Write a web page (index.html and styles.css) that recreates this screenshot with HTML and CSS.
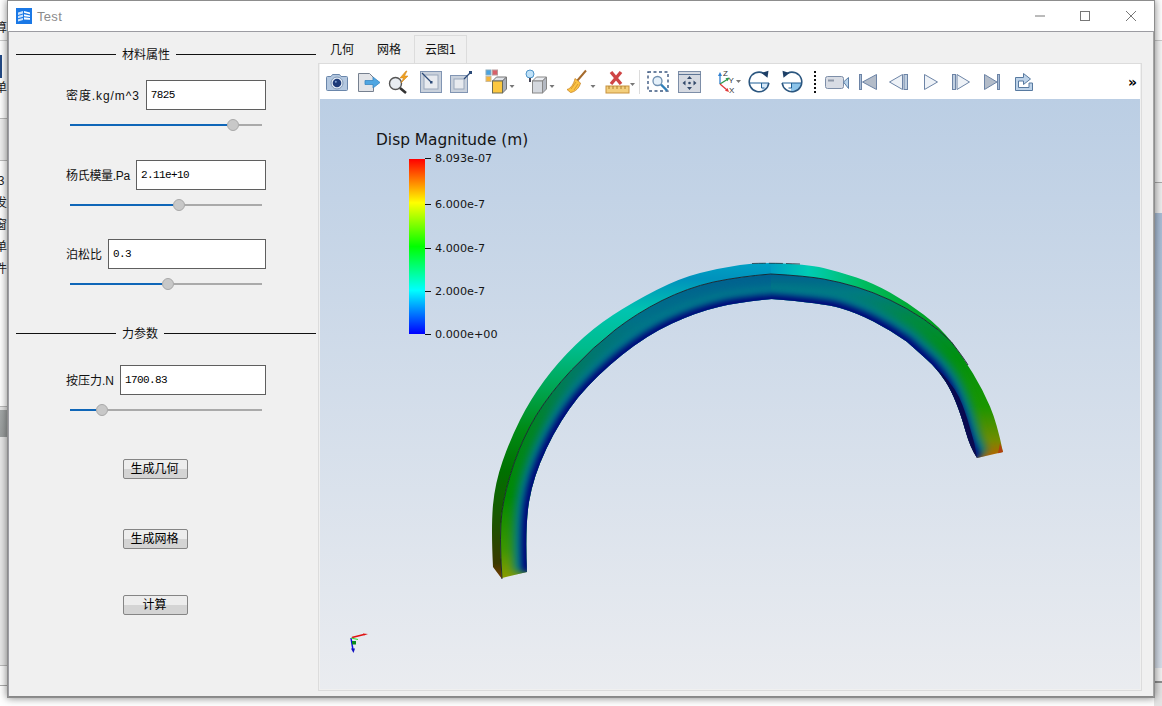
FILE: index.html
```html
<!DOCTYPE html>
<html lang="zh">
<head>
<meta charset="utf-8">
<title>Test</title>
<link rel="stylesheet" href="styles.css">
</head>
<body>
<div class="desktop">
  <div class="strip-left">
    <div class="bg-a"><span class="frag frag-a">算</span></div>
    <div class="bg-b"><i class="bluebar"></i><span class="frag frag-b">单</span></div>
    <div class="bg-c"></div>
    <div class="bg-d">
      <span class="frag">3</span><span class="frag">发</span><span class="frag">窗</span><span class="frag">单</span><span class="frag">件</span>
    </div>
    <div class="bg-gray"></div>
    <div class="bg-e"></div>
    <div class="bg-f"></div>
  </div>
  <div class="strip-right">
    <div class="r-a"></div><div class="r-b"></div><div class="r-b2"></div><div class="r-c"></div><div class="r-d"></div><div class="r-e"></div>
  </div>

  <div class="window">
    <header class="titlebar">
      <svg class="appicon" width="16" height="16" viewBox="0 0 16 16">
        <rect width="16" height="16" fill="#1a78e6"/>
        <path d="M2 4.500 7 3v2.400L2 7zM2 8l5-1.400v2.200L2 10.200zM2 11.200l5-1.300V12l-5 1.500z" fill="#cfe4fb"/>
        <path d="M8 3l6 1.500v1.700L8 4.800zM8 6.200l6 1.200v1.700L8 8.200zM8 9.300l6 .8v1.700L8 11.400z" fill="#fff"/>
      </svg>
      <span class="apptitle">Test</span>
      <div class="winctl">
        <svg width="45" height="30" viewBox="0 0 45 30"><path d="M17 15h10" stroke="#777" fill="none"/></svg>
        <svg width="45" height="30" viewBox="0 0 45 30"><rect x="17.500" y="10.500" width="9" height="9" stroke="#777" fill="none"/></svg>
        <svg width="45" height="30" viewBox="0 0 45 30"><path d="M18 10l10 10M28 10L18 20" stroke="#777" fill="none"/></svg>
      </div>
    </header>

    <main class="body">
      <aside class="panel">
        <div class="legendline"><span>材料属性</span></div>

        <div class="row row-1"><label>密度.kg/m^3</label><div class="input">7825</div></div>
        <div class="slider"><i class="fill" style="width:157px"></i><i class="knob"></i><i class="rest"></i></div>

        <div class="row row-2"><label>杨氏模量.Pa</label><div class="input">2.11e+10</div></div>
        <div class="slider"><i class="fill" style="width:103px"></i><i class="knob"></i><i class="rest"></i></div>

        <div class="row row-3"><label>泊松比</label><div class="input">0.3</div></div>
        <div class="slider"><i class="fill" style="width:92px"></i><i class="knob"></i><i class="rest"></i></div>

        <div class="legendline line-2"><span>力参数</span></div>

        <div class="row row-4"><label>按压力.N</label><div class="input">1700.83</div></div>
        <div class="slider"><i class="fill" style="width:26px"></i><i class="knob"></i><i class="rest"></i></div>

        <button class="btn btn-1">生成几何</button>
        <button class="btn btn-2">生成网格</button>
        <button class="btn btn-3">计算</button>
      </aside>

      <section class="workspace">
        <nav class="tabs">
          <span class="tab tab-1">几何</span>
          <span class="tab tab-2">网格</span>
          <span class="tab active">云图1</span>
        </nav>
        <div class="pane">
          <div class="toolbar">
            <!-- camera -->
            <svg class="ic" width="24" height="24" viewBox="0 0 24 24">
              <path d="M1.500 7.500a1 1 0 0 1 1-1H6l1.500-2h7l1.500 2h5.500a1 1 0 0 1 1 1v12a1 1 0 0 1-1 1h-19a1 1 0 0 1-1-1z" fill="#b4c8e0" stroke="#6a86aa"/>
              <circle cx="12" cy="13" r="6" fill="#e4ecf5" stroke="#7f97b6"/>
              <circle cx="12" cy="13" r="4.300" fill="#1d3a78"/>
              <circle cx="10.800" cy="11.700" r="1" fill="#7f9fd0"/>
            </svg>
            <!-- export -->
            <svg class="ic g8" width="24" height="24" viewBox="0 0 24 24">
              <path d="M1.500 3.500h11l4 4v14h-15z" fill="#e2e4e8" stroke="#76808f"/>
              <path d="M8 10.500h8V7l7 5.500L16 18v-3.500H8z" fill="#4fa6e2" stroke="#3a86c0" stroke-width=".8"/>
            </svg>
            <!-- magnifier + bolt -->
            <svg class="ic g6" width="24" height="24" viewBox="0 0 24 24">
              <circle cx="8.500" cy="13.500" r="6" fill="#e9edf2" stroke="#555" stroke-width="1.400"/>
              <path d="M13 18l6 5" stroke="#333" stroke-width="2.600" fill="none"/>
              <path d="M19 1l-6 7h3.500L14 13l7-7h-3.500L20 1z" fill="#f0a020" stroke="#c8801a" stroke-width=".5"/>
            </svg>
            <!-- reset camera -->
            <svg class="ic g8" width="24" height="24" viewBox="0 0 24 24">
              <rect x="1.500" y="1.500" width="21" height="21" fill="#c9d1dc" stroke="#8195b3"/>
              <rect x="5" y="5" width="14" height="14" fill="#e7eaef" stroke="#9aa8bb"/>
              <path d="M3 3l9 9" stroke="#2c4a78" stroke-width="1.200" fill="none"/>
              <rect x="11" y="11" width="2.500" height="2.500" fill="#2c4a78"/>
            </svg>
            <!-- zoom closest -->
            <svg class="ic g6" width="24" height="24" viewBox="0 0 24 24">
              <rect x="1.500" y="5.500" width="17" height="17" fill="#c9d1dc" stroke="#8195b3"/>
              <rect x="5" y="9" width="10" height="10" fill="#e7eaef" stroke="#9aa8bb"/>
              <path d="M15 9l6-6" stroke="#2c4a78" stroke-width="1.200" fill="none"/>
              <rect x="20" y="1" width="3" height="3" fill="#2c4a78"/>
            </svg>
            <!-- colour cube -->
            <svg class="ic g12" width="30" height="26" viewBox="0 0 30 26">
              <rect x="1" y="1" width="5" height="5" fill="#4aa3e0" stroke="#8ab"/>
              <rect x="7.500" y="1" width="5" height="5" fill="#d8606a" stroke="#b99"/>
              <rect x="1" y="7.500" width="5" height="5" fill="#f5b53a" stroke="#cb9"/>
              <path d="M7.500 12l4-4h10l-4 4z" fill="#e0e3e8" stroke="#777"/>
              <path d="M17.500 12l4-4v12l-4 4z" fill="#a8aeb8" stroke="#777"/>
              <rect x="7.500" y="12" width="10" height="12" fill="#fcc840" stroke="#6b6b55"/>
              <path d="M24.500 16h5l-2.500 3z" fill="#777"/>
            </svg>
            <!-- light cube -->
            <svg class="ic g10" width="30" height="26" viewBox="0 0 30 26">
              <circle cx="5" cy="5" r="4" fill="#bfe1f8" stroke="#4f94c8"/>
              <path d="M4 9h2v4H4z" fill="#445"/>
              <path d="M7.500 12l4-4h10l-4 4z" fill="#eceef2" stroke="#888"/>
              <path d="M17.500 12l4-4v12l-4 4z" fill="#b4b9c2" stroke="#888"/>
              <rect x="7.500" y="12" width="10" height="12" fill="#d4d8de" stroke="#888"/>
              <path d="M24.500 16h5l-2.500 3z" fill="#777"/>
            </svg>
            <!-- broom -->
            <svg class="ic g11" width="30" height="26" viewBox="0 0 30 26">
              <path d="M20 1.500l-9 10.500" stroke="#a56a2c" stroke-width="2" fill="none"/>
              <path d="M9 9.500l5.500 4.500C13.500 19 9 23 4.500 23.500L1 20.500C5 19.500 8 14.500 9 9.500z" fill="#fbc343" stroke="#c9862a" stroke-width=".8"/>
              <path d="M10 13l-5 7M12 15l-4 6" stroke="#c9862a" stroke-width=".7" fill="none"/>
              <path d="M24.500 16h5l-2.500 3z" fill="#777"/>
            </svg>
            <!-- ruler x -->
            <svg class="ic g9" width="30" height="26" viewBox="0 0 30 26">
              <rect x="1" y="17" width="23" height="7" fill="#f3cf7d" stroke="#c8923f"/>
              <path d="M4 17v3M8 17v3M12 17v3M16 17v3M20 17v3" stroke="#b0802f" fill="none"/>
              <path d="M6 3l10 12M16 3L6 15" stroke="#cf4545" stroke-width="3.400" fill="none"/>
              <path d="M25 14h5l-2.500 3z" fill="#777"/>
            </svg>
            <i class="sep"></i>
            <!-- zoom box -->
            <svg class="ic g7" width="22" height="24" viewBox="0 0 22 24">
              <rect x="1" y="2" width="20" height="19" fill="#fff" stroke="#3c5880" stroke-width="1.400" stroke-dasharray="3 2.500"/>
              <circle cx="10.500" cy="11" r="4.500" fill="#e6f1fa" stroke="#6f8fb0" stroke-width="1.300"/>
              <path d="M14 14.500l6 6" stroke="#2f7fb8" stroke-width="2.400" fill="none"/>
            </svg>
            <!-- move -->
            <svg class="ic g9" width="23" height="24" viewBox="0 0 23 24">
              <rect x=".5" y="1.500" width="22" height="21" fill="#d5d9e1" stroke="#7d8ea8"/>
              <path d="M.5 4.500h22" stroke="#5f7696"/>
              <path d="M11.500 6l-2.500 3h5zM11.500 20l-2.500-3h5zM4.500 13l3-2.500v5zM18.500 13l-3-2.500v5z" fill="#33496a"/>
              <circle cx="11.500" cy="13" r="1.300" fill="#33496a"/>
            </svg>
            <!-- xyz -->
            <svg class="ic g14" width="26" height="26" viewBox="0 0 26 26">
              <path d="M5 15V6" stroke="#2f7fd0" stroke-width="1.300" fill="none"/>
              <path d="M5 3l-2 4h4z" fill="#2f7fd0"/>
              <path d="M5 15l8-5" stroke="#2f9a4a" stroke-width="1.300" fill="none"/>
              <path d="M14.500 8.500l-4 .8 2 3z" fill="#2f9a4a"/>
              <path d="M5 15l7 6" stroke="#e03a3a" stroke-width="1.300" fill="none"/>
              <path d="M14 23l-1.500-4-2.500 2.800z" fill="#e03a3a"/>
              <text class="axl" x="8" y="7">Z</text>
              <text class="axl" x="13.500" y="14">Y</text>
              <text class="axl" x="14" y="24">X</text>
              <path d="M21 11h5l-2.500 3z" fill="#777"/>
            </svg>
            <!-- rotate cw -->
            <svg class="ic g7" width="22" height="24" viewBox="0 0 22 24">
              <path d="M14 13v9a10 10 0 0 0 6.500-9z" fill="#d5e8f8"/>
              <path d="M1 13h20M13.500 13v5h3" stroke="#1f5f95" fill="none"/>
              <path d="M15.500 3.200A9.800 9.800 0 1 0 20.800 13" stroke="#2b567f" stroke-width="1.600" fill="none"/>
              <path d="M19.500 7.800L20.500 .8 13.500 3z" fill="#1d3f66"/>
            </svg>
            <!-- rotate ccw -->
            <svg class="ic g11" width="22" height="24" viewBox="0 0 22 24">
              <path d="M10 13v9a10 10 0 0 0 10.800-9z" fill="#8cc4ea"/>
              <path d="M1 13h20M10.500 13v5h-3" stroke="#1f5f95" fill="none"/>
              <path d="M6.500 3.200A9.800 9.800 0 1 1 1.200 13" stroke="#2b567f" stroke-width="1.600" fill="none"/>
              <path d="M2.500 7.800L1.500 .8 8.500 3z" fill="#1d3f66"/>
            </svg>
            <i class="dots"></i>
            <!-- video -->
            <svg class="ic g9" width="24" height="24" viewBox="0 0 24 24">
              <rect x=".5" y="6.500" width="18" height="12" rx="2" fill="#d8dce4" stroke="#7d8ea8"/>
              <rect x="3" y="9.500" width="6" height="2" fill="#8e98a8"/>
              <path d="M18.500 12l5-4.500v11z" fill="#b8d2ea" stroke="#5d7fa6"/>
            </svg>
            <!-- first -->
            <svg class="ic g10" width="18" height="24" viewBox="0 0 18 24">
              <rect x=".5" y="4.500" width="2" height="15" fill="#a9bdd6" stroke="#6d84a6"/>
              <path d="M17.500 4.500v15L3.500 12z" fill="#b3bcc9" stroke="#6d84a6"/>
            </svg>
            <!-- prev -->
            <svg class="ic g12" width="19" height="24" viewBox="0 0 19 24">
              <path d="M13.500 4.500v15L.5 12z" fill="#eef2f7" stroke="#6d84a6"/>
              <rect x="15" y="4.500" width="3.500" height="15" fill="#c0cfe0" stroke="#6d84a6"/>
            </svg>
            <!-- play -->
            <svg class="ic g16" width="14" height="24" viewBox="0 0 14 24">
              <path d="M.5 4.500v15L13.500 12z" fill="#eef2f7" stroke="#6d84a6"/>
            </svg>
            <!-- next -->
            <svg class="ic g14" width="18" height="24" viewBox="0 0 18 24">
              <rect x=".5" y="4.500" width="3" height="15" fill="#c0cfe0" stroke="#6d84a6"/>
              <path d="M5 4.500v15L17.500 12z" fill="#eef2f7" stroke="#6d84a6"/>
            </svg>
            <!-- last -->
            <svg class="ic g14" width="16" height="24" viewBox="0 0 16 24">
              <path d="M.5 4.500v15L13 12z" fill="#b3bcc9" stroke="#6d84a6"/>
              <rect x="13.500" y="4.500" width="2" height="15" fill="#a9bdd6" stroke="#6d84a6"/>
            </svg>
            <!-- loop -->
            <svg class="ic g14" width="19" height="24" viewBox="0 0 19 24">
              <path d="M1.500 7.500h8V3.500l7 5.500-7 5.500V11H4.500v6.500H15V13h3.500v7.500h-17z" fill="#bdd2e8" stroke="#587aa0" stroke-linejoin="round"/>
            </svg>
            <span class="more">»</span>
          </div>

          <div class="viewport">
            <svg class="scene" width="820" height="589" viewBox="320 99 820 589">
              <defs>
                <linearGradient id="rainbow" x1="0" y1="1" x2="0" y2="0">
                  <stop offset="0" stop-color="#00f"/><stop offset=".25" stop-color="#0ff"/>
                  <stop offset=".5" stop-color="#0f0"/><stop offset=".75" stop-color="#ff0"/>
                  <stop offset="1" stop-color="#f00"/>
                </linearGradient>
                <linearGradient id="topL" gradientUnits="userSpaceOnUse" x1="0" y1="579" x2="0" y2="263">
                  <stop offset="0" stop-color="#7a3a00"/><stop offset=".05" stop-color="#3a3a00"/>
                  <stop offset=".17" stop-color="#1e5200"/><stop offset=".34" stop-color="#007000"/>
                  <stop offset=".47" stop-color="#008a14"/><stop offset=".6" stop-color="#00a550"/>
                  <stop offset=".73" stop-color="#00bc8c"/><stop offset=".85" stop-color="#00c4b0"/>
                  <stop offset=".95" stop-color="#0092bc"/><stop offset="1" stop-color="#00a0c4"/>
                </linearGradient>
                <linearGradient id="topR" gradientUnits="userSpaceOnUse" x1="771" y1="0" x2="1003" y2="0">
                  <stop offset="0" stop-color="#00a0c4"/><stop offset=".16" stop-color="#00ccb4"/>
                  <stop offset=".4" stop-color="#00bc60"/><stop offset=".7" stop-color="#00a020"/>
                  <stop offset="1" stop-color="#009000"/>
                </linearGradient>
                <linearGradient id="frontL" gradientUnits="userSpaceOnUse" x1="0" y1="579" x2="0" y2="274">
                  <stop offset="0" stop-color="#8c9c00"/><stop offset=".1" stop-color="#3c9600"/>
                  <stop offset=".27" stop-color="#008a00"/><stop offset=".5" stop-color="#008424"/>
                  <stop offset=".65" stop-color="#007c58"/><stop offset=".85" stop-color="#007088"/>
                  <stop offset="1" stop-color="#006090"/>
                </linearGradient>
                <linearGradient id="frontR" gradientUnits="userSpaceOnUse" x1="0" y1="274" x2="0" y2="458">
                  <stop offset="0" stop-color="#006090"/><stop offset=".1" stop-color="#007a80"/>
                  <stop offset=".25" stop-color="#008a40"/><stop offset=".45" stop-color="#009010"/>
                  <stop offset=".72" stop-color="#1a9600"/><stop offset=".9" stop-color="#708c00"/>
                  <stop offset="1" stop-color="#c06000"/>
                </linearGradient>
                <filter id="b3" x="-10%" y="-10%" width="120%" height="120%"><feGaussianBlur stdDeviation="3"/></filter>
                <filter id="b4" x="-10%" y="-10%" width="120%" height="120%"><feGaussianBlur stdDeviation="4"/></filter>
                <clipPath id="clipFL"><path d="M502,578Q499,533 502,511.500Q505,490 514,463.500Q523,437 536.500,415Q550,393 571.500,370Q593,347 615,330Q637,313 662,300.500Q687,288 713.500,282Q740,276.500 772,274L772,299Q740,302 718.500,307Q697,312 672,323.500Q647,335 622,355Q597,375 578.500,397Q560,420 546.500,448.500Q533,477 529,502Q525,527 527,572Z"/></clipPath>
                <clipPath id="clipFR"><path d="M771,274Q807,276 823.500,279Q840,282 856.500,287Q873,292 890,300Q907,308 923.500,319Q940,330 951.500,342Q963,357 973,373.500Q983,390 990,406.500Q997,423 1003,452L977,458Q970,447 965.500,431Q961,415 956,402.500Q951,390 945.500,381.500Q940,373 932,364.500Q923,356 906.500,341.500Q890,330 873.500,321.500Q857,313 840,308Q823,303 771,299Z"/></clipPath>
              </defs>

              <!-- scalar bar -->
              <rect x="409" y="159" width="16" height="175" fill="url(#rainbow)"/>
              <path d="M425 158.500h6M425 204.500h6M425 248.500h6M425 291.500h6M425 334.500h6" stroke="#111" fill="none"/>
              <text class="lg-title" x="376" y="145">Disp Magnitude (m)</text>
              <text class="lg" x="435" y="162">8.093e-07</text>
              <text class="lg" x="435" y="208">6.000e-7</text>
              <text class="lg" x="435" y="252">4.000e-7</text>
              <text class="lg" x="435" y="295">2.000e-7</text>
              <text class="lg" x="435" y="338">0.000e+00</text>

              <!-- ring: outer faces -->
              <path fill="url(#topL)" d="M493,567Q491,527 493,505Q495,483 502.500,461.500Q510,440 520,420Q530,400 544,381Q558,362 575.500,345Q593,328 613,315Q633,302 656.500,290Q680,278 700,273Q720,268 740,265Q755,263 772,263L772,274.500Q740,276.500 713.500,282Q687,288 662,300.500Q637,313 615,330Q593,347 571.500,370Q550,393 536.500,415Q523,437 514,463.500Q505,490 502,511.500Q499,533 502,579Z"/>
              <path fill="url(#topR)" d="M771,263Q807,264 823.500,268Q840,272 856.500,277.500Q873,283 890,292.500Q907,302 923.500,314.500Q940,327 951.500,342Q940,330 923.500,319Q907,308 890,300Q873,292 856.500,287Q840,282 823.500,279Q807,276 771,274.500Z"/>

              <!-- ring: front face, left half -->
              <g clip-path="url(#clipFL)">
                <rect x="490" y="260" width="290" height="325" fill="url(#frontL)"/>
                <path d="M527,572Q525,527 529,502Q533,477 546.500,448.500Q560,420 578.500,397Q597,375 622,355Q647,335 672,323.500Q697,312 718.500,307Q740,302 780,299" fill="none" stroke="#00788c" stroke-width="26" filter="url(#b4)"/>
                <path d="M527,572Q525,527 529,502Q533,477 546.500,448.500Q560,420 578.500,397Q597,375 622,355Q647,335 672,323.500Q697,312 718.500,307Q740,302 780,299" fill="none" stroke="#000078" stroke-width="10" filter="url(#b3)"/>
              </g>
              <!-- ring: front face, right half -->
              <g clip-path="url(#clipFR)">
                <rect x="765" y="260" width="245" height="205" fill="url(#frontR)"/>
                <path d="M760,299Q823,303 840,308Q857,313 873.500,321.500Q890,330 906.500,341.500Q923,356 932,364.500Q940,373 945.500,381.500Q951,390 956,402.500Q961,415 965.500,431Q970,447 977,458" fill="none" stroke="#00788c" stroke-width="26" filter="url(#b4)"/>
                <path d="M760,299Q823,303 840,308Q857,313 873.500,321.500Q890,330 906.500,341.500Q923,356 932,364.500Q940,373 945.500,381.500Q951,390 956,402.500Q961,415 965.500,431Q970,447 977,458" fill="none" stroke="#000078" stroke-width="10" filter="url(#b3)"/>
              </g>
              <path d="M935,367Q940,373 945.500,381.500Q951,390 956,402.500Q961,415 965.500,431Q970,447 977,458Q975,443 970,428Q965,410 959,397Q950,380 935,367Z" fill="#0a0a50"/>
              <path d="M1003,452l-5,1.200 2,-10z" fill="#b04010"/>

              <!-- ring: edge lines -->
              <path class="edge" d="M502,579Q499,533 502,511.500Q505,490 514,463.500Q523,437 536.500,415Q550,393 571.500,370Q593,347 615,330Q637,313 662,300.500Q687,288 713.500,282Q740,276.500 771,274Q807,276 823.500,279Q840,282 856.500,287Q873,292 890,300Q907,308 923.500,319Q940,330 951.500,342Q963,357 968,365"/>
              <path class="edge dash" d="M752,263.500Q771,262.800 800,264"/>

              <!-- orientation triad -->
              <path d="M352 637.500L364 634.500" stroke="#e01010" stroke-width="1.300" fill="none"/>
              <path d="M363 633.500l5 .5-4 1.500z" fill="#e01010"/>
              <path d="M351 638l2 12" stroke="#1010e0" stroke-width="1.500" fill="none"/>
              <path d="M351 648.500h4l-1.500 4.500z" fill="#1010c0"/>
              <path d="M351 638l7 1.500" stroke="#30e030" fill="none"/>
              <rect x="352" y="641" width="4" height="3.500" fill="#0a8a20"/>
            </svg>
          </div>
        </div>
      </section>
    </main>
  </div>
</div>
</body>
</html>
```
FILE: styles.css
```css
* { box-sizing: border-box; }
html, body { margin: 0; padding: 0; }
body { overflow: hidden; background: #fff; font-family: "Liberation Sans", "Noto Sans CJK SC", sans-serif; font-size: 12px; color: #111; }

.desktop { position: relative; width: 1162px; height: 706px; overflow: hidden; display: flex; justify-content: space-between; background: #fff; }

/* background application peeking out around the window */
.strip-left { width: 8px; height: 706px; overflow: hidden; display: flex; flex-direction: column; }
.strip-left > div { flex: none; position: relative; }
.bg-a { height: 41px; background: #fff; border-bottom: 1px solid #ccc; padding-top: 21px; }
.bg-b { height: 78px; background: #fff; border-bottom: 1px solid #bbb; padding-top: 40px; }
.bluebar { position: absolute; left: 0; top: 14px; width: 2px; height: 23px; background: #234a86; }
.bg-c { height: 42px; background: #efefef; border-bottom: 1px solid #bbb; }
.bg-d { height: 246px; background: #fff; border-bottom: 1px solid #bbb; padding-top: 9px; }
.bg-gray { height: 30px; border-top: 3px solid #e6e6e6; background: linear-gradient(#a3a7a7, #9a9e9e); }
.bg-e { height: 229px; background: #e8e8e8; border-bottom: 1px solid #bbb; }
.bg-f { height: 20px; background: #fbfbfb; border-bottom: 1px solid #aaa; }
.frag { display: block; width: 14px; margin-left: -6px; height: 22px; line-height: 22px; font-size: 12px; color: #222; text-align: center; }
.frag-a, .frag-b { height: 14px; line-height: 14px; }

.strip-right { width: 8px; height: 706px; display: flex; flex-direction: column; }
.r-a { height: 41px; background: #fff; border-bottom: 1px solid #ccc; }
.r-b { height: 142px; background: #f6f6f6; border-bottom: 1px solid #aaa; }
.r-b2 { height: 30px; background: #eee; }
.r-c { height: 455px; background: linear-gradient(#a9bdd6, #d6dee9); }
.r-d { height: 15px; background: #f2f2f2; border-bottom: 2px solid #8e8e8e; }
.r-e { flex: 1; background: #e4e4e4; }

/* window */
.window { position: absolute; left: 7px; top: 0; width: 1148px; height: 698px; border: 1px solid #8d8d8d; box-shadow: 0 0 8px rgba(0, 0, 0, .5); background: #f0f0f0; display: flex; flex-direction: column; }
.titlebar { height: 30px; flex: none; background: #fff; display: flex; align-items: center; padding-left: 8px; }
.appicon { flex: none; }
.apptitle { margin-left: 5px; font-size: 13px; color: #8b8b8b; letter-spacing: .3px; }
.winctl { margin-left: auto; display: flex; padding-right: 1px; }
.winctl svg { display: block; }

.body { flex: 1; min-height: 0; display: flex; border: 1px solid #9c9ca2; border-right-color: #a5a5a5; border-bottom-color: #888; background: #f0f0f0; }

/* left form panel */
.panel { width: 309px; flex: none; padding-top: 14px; display: flex; flex-direction: column; align-items: flex-start; }
.legendline { width: 300px; margin-left: 7px; height: 16px; line-height: 16px; display: flex; align-items: center; gap: 6px; }
.legendline::before { content: ""; width: 100px; height: 1px; background: #111; flex: none; }
.legendline::after { content: ""; flex: 1; height: 1px; background: #111; }
.legendline span { white-space: nowrap; margin-top: 2px; }
.line-2 { margin-top: 35px; }

.row { display: flex; align-items: center; gap: 6px; height: 30px; width: 200px; margin-left: 57px; }
.row-1 { margin-top: 18px; }
.row-2 { margin-top: 29px; }
.row-3 { margin-top: 28px; }
.row-4 { margin-top: 24px; }
.row label { white-space: nowrap; padding-bottom: 2px; }
.row-1 label { letter-spacing: .9px; }
.row-2 label { letter-spacing: -.3px; }
.input { flex: 1; height: 30px; background: #fff; border: 1px solid #5f5f5f; padding-left: 4px; line-height: 28px; font-family: "Liberation Mono", monospace; font-size: 11px; letter-spacing: -.6px; color: #000; }

.slider { width: 192px; margin-left: 61px; margin-top: 9px; height: 12px; display: flex; align-items: center; }
.slider i { display: block; flex: none; }
.fill { height: 2px; background: #0f66b8; }
.knob { width: 12px; height: 12px; border-radius: 50%; background: #c8c8c8; border: 1px solid #a8a8a8; }
.slider .rest { flex: 1; height: 2px; background: #aaa; }

.btn { display: block; width: 65px; height: 20px; margin-left: 114px; padding: 1px 2px 0 0; border: 1px solid #858585; border-radius: 2px; background: linear-gradient(#ededed 50%, #d4d4d4 50%); font: inherit; color: #000; line-height: 17px; }
.btn-1 { margin-top: 43px; }
.btn-2 { margin-top: 50px; }
.btn-3 { margin-top: 46px; }

/* right workspace */
.workspace { flex: 1; min-width: 0; display: flex; flex-direction: column; padding: 3px 11px 5px 0; }
.tabs { display: flex; height: 28px; flex: none; align-items: stretch; }
.tab { line-height: 30px; white-space: nowrap; color: #111; }
.tab-1 { padding: 0 11px; margin-left: 1px; }
.tab-2 { padding: 0 12px; }
.tab.active { margin-left: 1px; padding: 0 10px; border: 1px solid #dcdcdc; border-bottom: 0; line-height: 29px; }

.pane { flex: 1; min-height: 0; border: 1px solid #dcdcdc; padding: 0 1px 1px; display: flex; flex-direction: column; }
.toolbar { height: 35px; flex: none; background: #fff; display: flex; align-items: center; padding-left: 5px; }
.ic { flex: none; display: block; }
.g6 { margin-left: 6px; } .g7 { margin-left: 7px; } .g8 { margin-left: 8px; } .g9 { margin-left: 9px; }
.g10 { margin-left: 10px; } .g11 { margin-left: 11px; } .g12 { margin-left: 12px; } .g14 { margin-left: 14px; } .g16 { margin-left: 16px; }
.sep { flex: none; width: 1px; height: 24px; margin-left: 4px; background: #dcdcdc; }
.dots { flex: none; width: 2px; height: 22px; margin-left: 11px; background-image: linear-gradient(#111 50%, transparent 50%); background-size: 2px 4px; }
.more { margin-left: auto; margin-right: 3px; font: bold 14px/14px "DejaVu Sans", sans-serif; color: #000; }
.axl { font: 8px "Liberation Sans", sans-serif; fill: #333; }

.viewport { flex: 1; min-height: 0; overflow: hidden; background: linear-gradient(#bbcee4, #eaecf0); }
.scene { display: block; }
.lg { font: 11.200px "DejaVu Sans", sans-serif; fill: #151515; }
.lg-title { font: 15.400px "DejaVu Sans", sans-serif; fill: #151515; }
.edge { fill: none; stroke: #16222a; stroke-width: .9; }
.dash { stroke-dasharray: 14 3; stroke-width: .7; }
```
